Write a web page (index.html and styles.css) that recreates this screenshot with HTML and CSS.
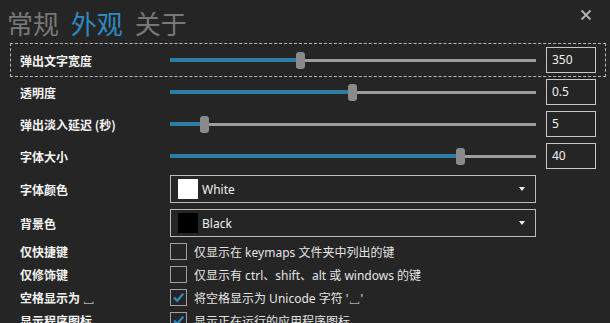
FILE: index.html
```html
<!DOCTYPE html>
<html lang="zh-CN">
<head>
  <meta charset="UTF-8">
  <title>设置</title>
  <link rel="stylesheet" href="styles.css">
</head>
<body>

  <div class="tabs">
    <span class="tab">常规</span>
    <span class="tab active">外观</span>
    <span class="tab">关于</span>
    <svg class="close" width="12" height="12" viewBox="0 0 12 12">
      <path d="M1.5 1.5 L10.5 10.5 M10.5 1.5 L1.5 10.5" stroke="#b4b4b4" stroke-width="1.8" fill="none"/>
    </svg>
  </div>

  <div class="settings">
    <!-- 슬라이더 -->
    <div class="row slider-row focused">
      <div class="label">弹出文字宽度</div>
      <div class="slider"><div class="fill" style="width:126px"></div><div class="thumb"></div><div class="rest"></div></div>
      <div class="num">350</div>
    </div>
    <div class="row slider-row">
      <div class="label">透明度</div>
      <div class="slider"><div class="fill" style="width:178px"></div><div class="thumb"></div><div class="rest"></div></div>
      <div class="num">0.5</div>
    </div>
    <div class="row slider-row">
      <div class="label">弹出淡入延迟 (秒)</div>
      <div class="slider"><div class="fill" style="width:30px"></div><div class="thumb"></div><div class="rest"></div></div>
      <div class="num">5</div>
    </div>
    <div class="row slider-row">
      <div class="label">字体大小</div>
      <div class="slider"><div class="fill" style="width:286px"></div><div class="thumb"></div><div class="rest"></div></div>
      <div class="num">40</div>
    </div>

    <!-- 드롭다운 -->
    <div class="row select-row">
      <div class="label">字体颜色</div>
      <div class="select">
        <span class="swatch white"></span>
        <span class="select-text">White</span>
        <span class="arrow"></span>
      </div>
    </div>
    <div class="row select-row">
      <div class="label">背景色</div>
      <div class="select">
        <span class="swatch black"></span>
        <span class="select-text">Black</span>
        <span class="arrow"></span>
      </div>
    </div>

    <!-- 체크박스 -->
    <div class="row check-row">
      <div class="label">仅快捷键</div>
      <span class="box"></span>
      <span class="check-text">仅显示在 keymaps 文件夹中列出的键</span>
    </div>
    <div class="row check-row">
      <div class="label">仅修饰键</div>
      <span class="box"></span>
      <span class="check-text">仅显示有 ctrl、shift、alt 或 windows 的键</span>
    </div>
    <div class="row check-row">
      <div class="label">空格显示为 ␣</div>
      <span class="box checked"><svg width="15" height="15" viewBox="0 0 15 15"><path d="M3 7.5 L6.2 10.8 L12.3 3.6" stroke="#2e8bc4" stroke-width="2.2" fill="none"/></svg></span>
      <span class="check-text">将空格显示为 Unicode 字符 '␣'</span>
    </div>
    <div class="row check-row">
      <div class="label">显示程序图标</div>
      <span class="box checked"><svg width="15" height="15" viewBox="0 0 15 15"><path d="M3 7.5 L6.2 10.8 L12.3 3.6" stroke="#2e8bc4" stroke-width="2.2" fill="none"/></svg></span>
      <span class="check-text">显示正在运行的应用程序图标</span>
    </div>
  </div>

</body>
</html>
```

FILE: styles.css
```css
body{
  margin: 0;
  background-color: #252525;
  color: #e8e8e8;
  font-family: "Noto Sans", "Noto Sans CJK SC", sans-serif;
  font-size: 12px;
  overflow: hidden;
}

/* 상단 탭 */
.tabs{
  position: relative;
  height: 44px;
  padding-left: 7px;
  box-sizing: border-box;
  padding-top: 8px;
  font-family: "Noto Sans CJK SC", sans-serif;
  font-size: 26px;
  line-height: 30px;
}
.tab{
  color: #787878;
  margin-right: 6px;
}
.tab.active{color: #2d8ac3;}
.close{
  position: absolute;
  right: 18px;
  top: 9px;
}

/* 공통 행 */
.settings{
  margin-left: 11px;
  width: 594px;
}
.row{
  display: flex;
  align-items: center;
}
.label{
  width: 150px;
  padding-left: 9px;
  flex: none;
  font-family: "Noto Sans CJK SC", sans-serif;
  font-weight: bold;
  color: #f4f4f4;
  font-size: 12px;
}
.focused{outline: 1px dashed #b8b8b8;}

/* 슬라이더 */
.slider-row{height: 32px;}
.slider{
  width: 366px;
  display: flex;
  align-items: center;
}
.fill{
  height: 4px;
  background-color: #2f7ca3;
}
.thumb{
  width: 9px;
  height: 17px;
  border-radius: 3px;
  background-color: #8a8a8a;
  flex: none;
}
.rest{
  flex: 1;
  height: 3px;
  background-color: #9c9c9c;
}
.num{
  width: 50px;
  height: 26px;
  box-sizing: border-box;
  margin-left: 10px;
  border: 1px solid #c8c8c8;
  padding-left: 5px;
  line-height: 23px;
  color: #f0f0f0;
}

/* 드롭다운 */
.select-row{height: 34px;}
.select{
  width: 366px;
  height: 28px;
  box-sizing: border-box;
  border: 1px solid #bcbcbc;
  display: flex;
  align-items: center;
  padding-left: 7px;
}
.swatch{
  width: 20px;
  height: 20px;
}
.swatch.white{background-color: #fff;}
.swatch.black{background-color: #000;}
.select-text{
  margin-left: 4px;
  flex: 1;
  color: #f0f0f0;
}
.arrow{
  width: 0;
  height: 0;
  border-left: 3px solid transparent;
  border-right: 3px solid transparent;
  border-top: 4px solid #f0f0f0;
  margin-right: 10px;
}

/* 체크박스 */
.check-row{height: 23px;}
.check-row:first-of-type{margin-top: 1px;}
.box{
  width: 17px;
  height: 17px;
  box-sizing: border-box;
  border: 1px solid #a0a0a0;
  flex: none;
  display: flex;
  align-items: center;
  justify-content: center;
}
.check-text{
  margin-left: 7px;
  color: #e4e4e4;
}
```
